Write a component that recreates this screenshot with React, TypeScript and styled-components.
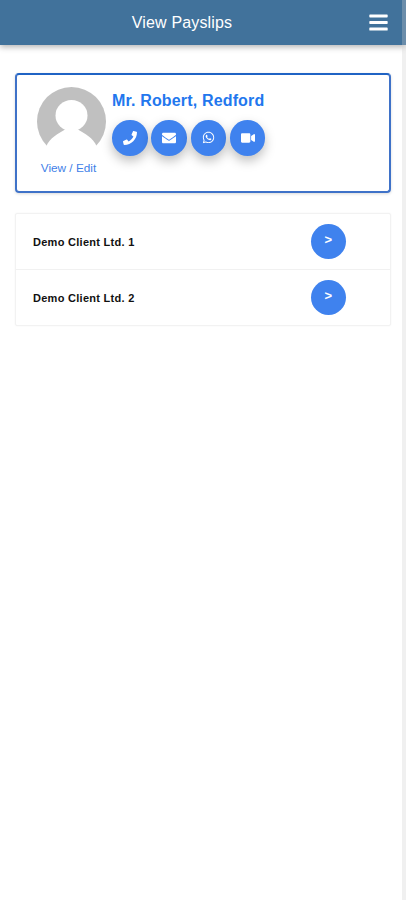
import React from "react";
import styled, { createGlobalStyle } from "styled-components";
import { FaPhone, FaEnvelope, FaWhatsapp, FaVideo, FaBars } from "react-icons/fa";

const Global = createGlobalStyle`
  html, body { margin: 0; padding: 0; background: #fff; }
  body { font-family: "Liberation Sans", Arial, sans-serif; }
`;

const Page = styled.div`
  width: 406px;
  height: 900px;
  position: relative;
  overflow: hidden;
`;

const Track = styled.div`
  position: absolute;
  top: 0;
  right: 0;
  bottom: 0;
  width: 4px;
  background: rgba(205, 205, 205, 0.3);
`;

const Header = styled.header`
  height: 45px;
  box-sizing: border-box;
  padding-right: 42px;
  background: #41729b;
  box-shadow: 0 2px 6px rgba(0, 0, 0, 0.3);
  display: flex;
  align-items: center;
  justify-content: center;
  position: relative;
  color: #fff;
`;

const Title = styled.h1`
  margin: 0;
  font-size: 16px;
  font-weight: 400;
  letter-spacing: 0.15px;
`;

const Menu = styled.span`
  position: absolute;
  right: 17px;
  top: 12px;
  font-size: 21px;
  line-height: 0;
  color: #fff;
`;

const Content = styled.main`
  padding: 28px 15px 0 15px;
`;

const ProfileCard = styled.section`
  height: 120px;
  box-sizing: border-box;
  border: 2px solid #3f72c8;
  border-top-color: #1f63c4;
  border-radius: 4px;
  display: flex;
  padding: 12px 0 0 20px;
  box-shadow: 0 1px 3px rgba(0, 0, 0, 0.15);
`;

const AvatarColumn = styled.div`
  width: 69px;
  display: flex;
  flex-direction: column;
  align-items: center;
`;

const AvatarLink = styled.a`
  margin: 5px 6px 0 0;
  font-size: 11.8px;
  line-height: 14px;
  color: #3f7fe8;
  white-space: nowrap;
`;

const Details = styled.div`
  margin-left: 6px;
`;

const Name = styled.div`
  font-size: 16px;
  line-height: 20px;
  font-weight: 700;
  letter-spacing: 0.16px;
  color: #2277ee;
  margin-top: 4px;
`;

const Actions = styled.div`
  display: flex;
  gap: 3.8px;
  margin-top: 9px;
`;

const RoundButton = styled.button<{ $shadow?: boolean }>`
  width: 35.5px;
  height: 35.5px;
  border: 0;
  padding: 0;
  border-radius: 50%;
  background: #3f82ee;
  color: #fff;
  display: flex;
  align-items: center;
  justify-content: center;
  font-family: inherit;
  font-size: 14px;
  box-shadow: ${(p) => (p.$shadow ? "0 5px 11px rgba(0,0,0,0.25)" : "none")};
`;

const List = styled.section`
  margin-top: 20px;
  border: 1px solid #f2f2f2;
  border-radius: 2px;
  box-shadow: 0 0 2px rgba(0, 0, 0, 0.05);
`;

const Row = styled.div`
  height: 55px;
  display: flex;
  align-items: center;
  justify-content: space-between;
  padding: 0 44px 0 17px;
  & + & { border-top: 1px solid #f1f1f1; }
`;

const ClientName = styled.span`
  font-size: 11px;
  font-weight: 700;
  letter-spacing: 0.28px;
  color: #111;
`;

const Chevron = styled.span`
  display: block;
  margin-top: -5px;
  font-size: 13px;
  font-weight: 700;
`;

function Avatar() {
  return (
    <svg width="69" height="69" viewBox="0 0 69 69" aria-hidden="true">
      <circle cx="34.5" cy="34.5" r="34.5" fill="#c0c0c0" />
      <ellipse cx="34.5" cy="28.5" rx="16" ry="15.5" fill="#fff" />
      <path d="M9 60C13 50 21 47 29 42h11c8 5 16 8 20 18v9H9z" fill="#fff" />
    </svg>
  );
}

export default function App() {
  return (
    <Page>
      <Global />
      <Header>
        <Title>View Payslips</Title>
        <Menu><FaBars /></Menu>
      </Header>
      <Content>
        <ProfileCard>
          <AvatarColumn>
            <Avatar />
            <AvatarLink>View / Edit</AvatarLink>
          </AvatarColumn>
          <Details>
            <Name>Mr. Robert, Redford</Name>
            <Actions>
              <RoundButton $shadow><FaPhone /></RoundButton>
              <RoundButton $shadow><FaEnvelope /></RoundButton>
              <RoundButton $shadow><FaWhatsapp size={13} /></RoundButton>
              <RoundButton $shadow><FaVideo /></RoundButton>
            </Actions>
          </Details>
        </ProfileCard>
        <List>
          <Row>
            <ClientName>Demo Client Ltd. 1</ClientName>
            <RoundButton><Chevron>&gt;</Chevron></RoundButton>
          </Row>
          <Row>
            <ClientName>Demo Client Ltd. 2</ClientName>
            <RoundButton><Chevron>&gt;</Chevron></RoundButton>
          </Row>
        </List>
      </Content>
      <Track />
    </Page>
  );
}
